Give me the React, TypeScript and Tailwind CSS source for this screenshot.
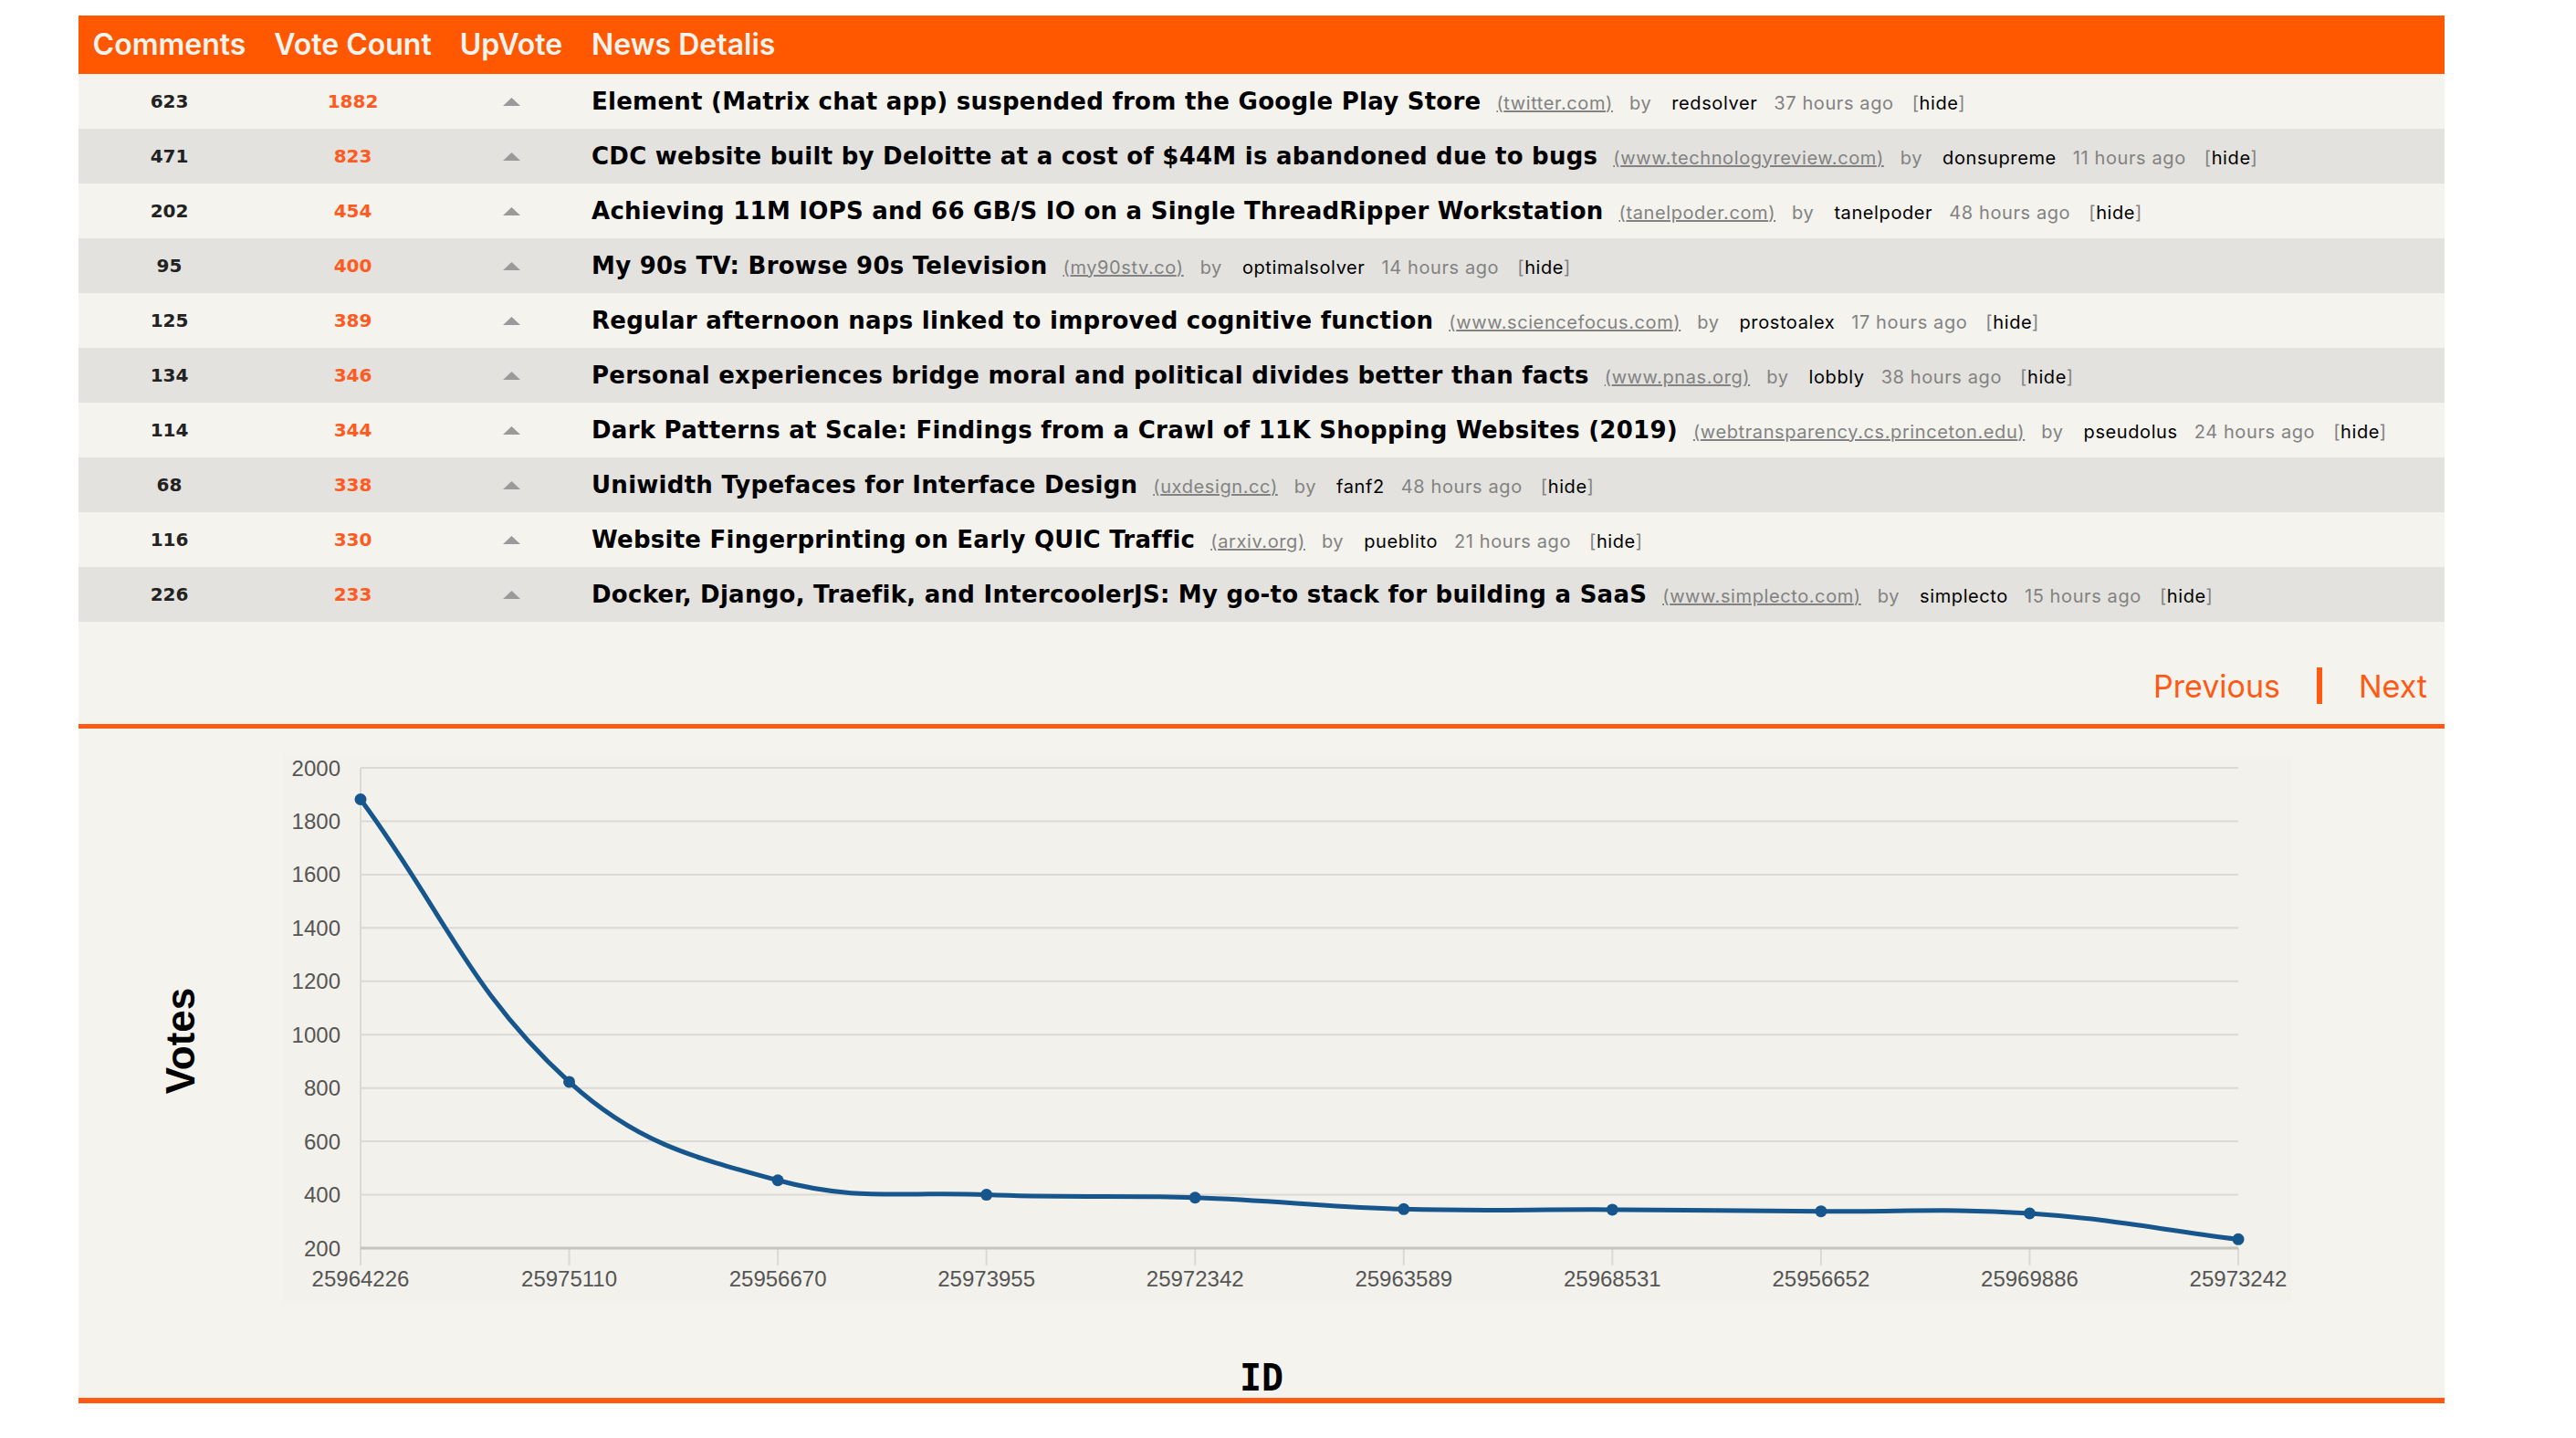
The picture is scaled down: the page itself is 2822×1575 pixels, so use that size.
import React from "react";

type Story = {
  id: number;
  comments: number;
  votes: number;
  title: string;
  site: string;
  user: string;
  age: string;
};

const stories: Story[] = [
  { id: 25964226, comments: 623, votes: 1882, title: "Element (Matrix chat app) suspended from the Google Play Store", site: "twitter.com", user: "redsolver", age: "37 hours ago" },
  { id: 25975110, comments: 471, votes: 823, title: "CDC website built by Deloitte at a cost of $44M is abandoned due to bugs", site: "www.technologyreview.com", user: "donsupreme", age: "11 hours ago" },
  { id: 25956670, comments: 202, votes: 454, title: "Achieving 11M IOPS and 66 GB/S IO on a Single ThreadRipper Workstation", site: "tanelpoder.com", user: "tanelpoder", age: "48 hours ago" },
  { id: 25973955, comments: 95, votes: 400, title: "My 90s TV: Browse 90s Television", site: "my90stv.co", user: "optimalsolver", age: "14 hours ago" },
  { id: 25972342, comments: 125, votes: 389, title: "Regular afternoon naps linked to improved cognitive function", site: "www.sciencefocus.com", user: "prostoalex", age: "17 hours ago" },
  { id: 25963589, comments: 134, votes: 346, title: "Personal experiences bridge moral and political divides better than facts", site: "www.pnas.org", user: "lobbly", age: "38 hours ago" },
  { id: 25968531, comments: 114, votes: 344, title: "Dark Patterns at Scale: Findings from a Crawl of 11K Shopping Websites (2019)", site: "webtransparency.cs.princeton.edu", user: "pseudolus", age: "24 hours ago" },
  { id: 25956652, comments: 68, votes: 338, title: "Uniwidth Typefaces for Interface Design", site: "uxdesign.cc", user: "fanf2", age: "48 hours ago" },
  { id: 25969886, comments: 116, votes: 330, title: "Website Fingerprinting on Early QUIC Traffic", site: "arxiv.org", user: "pueblito", age: "21 hours ago" },
  { id: 25973242, comments: 226, votes: 233, title: "Docker, Django, Traefik, and IntercoolerJS: My go-to stack for building a SaaS", site: "www.simplecto.com", user: "simplecto", age: "15 hours ago" },
];

function UpArrow() {
  return (
    <svg width="19" height="9" viewBox="0 0 19 9">
      <polygon points="9.5,0 19,9 0,9" fill="#9a9a9a" />
    </svg>
  );
}

type Pt = { x: number; y: number };

// chart.js style spline (tension 0.4)
function splinePath(pts: Pt[]) {
  const t = 0.4;
  const ctrl = pts.map((p1, i) => {
    const p0 = pts[i - 1] ?? p1;
    const p2 = pts[i + 1] ?? p1;
    const d01 = Math.hypot(p1.x - p0.x, p1.y - p0.y);
    const d12 = Math.hypot(p2.x - p1.x, p2.y - p1.y);
    const sum = d01 + d12 || 1;
    const fa = (t * d01) / sum;
    const fb = (t * d12) / sum;
    return {
      prev: { x: p1.x - fa * (p2.x - p0.x), y: p1.y - fa * (p2.y - p0.y) },
      next: { x: p1.x + fb * (p2.x - p0.x), y: p1.y + fb * (p2.y - p0.y) },
    };
  });
  let d = `M ${pts[0].x} ${pts[0].y}`;
  for (let i = 0; i < pts.length - 1; i++) {
    const a = ctrl[i].next;
    const b = ctrl[i + 1].prev;
    const p = pts[i + 1];
    d += ` C ${a.x} ${a.y} ${b.x} ${b.y} ${p.x} ${p.y}`;
  }
  return d;
}

function VotesChart() {
  const left = 85;
  const right = 2142;
  const step = (right - left) / (stories.length - 1);
  const yOf = (v: number) => 540 - ((v - 200) * 526) / 1800;
  const pts = stories.map((s, i) => ({ x: left + i * step, y: yOf(s.votes) }));
  const ticks = [400, 600, 800, 1000, 1200, 1400, 1600, 1800, 2000];

  return (
    <svg width="2201" height="600" viewBox="0 0 2201 600" className="block">
      {ticks.map((v) => (
        <line key={v} x1={left} x2={right} y1={yOf(v)} y2={yOf(v)} stroke="#dad9d4" strokeWidth="2" />
      ))}
      <line x1={left} x2={left} y1={yOf(2000)} y2={559} stroke="#dad9d4" strokeWidth="2" />
      {pts.slice(1).map((p, i) => (
        <line key={i} x1={p.x} x2={p.x} y1={540} y2={559} stroke="#dad9d4" strokeWidth="2" />
      ))}
      <line x1={left} x2={right} y1={540} y2={540} stroke="#c4c3be" strokeWidth="3" />
      {[200, ...ticks].map((v) => (
        <text key={v} x={63} y={yOf(v) + 8.5} textAnchor="end" fontSize="24" fill="#555" fontFamily="'Liberation Sans', Arial, sans-serif">
          {v}
        </text>
      ))}
      {stories.map((s, i) => (
        <text key={s.id} x={pts[i].x} y={582} textAnchor="middle" fontSize="24" fill="#555" fontFamily="'Liberation Sans', Arial, sans-serif">
          {s.id}
        </text>
      ))}
      <path d={splinePath(pts)} fill="none" stroke="#17568d" strokeWidth="5" />
      {pts.map((p, i) => (
        <circle key={i} cx={p.x} cy={p.y} r="6.5" fill="#17568d" />
      ))}
    </svg>
  );
}

export default function App() {
  return (
    <div className="min-h-screen bg-white pt-[17px]">
      <div className="ml-[86px] w-[2592px]">
        <div className="grid h-[64px] grid-cols-[199px_203px_144px_1fr] items-center bg-[#ff5800] font-['Inter',sans-serif] text-[32px] font-semibold text-[#f4f3ee]">
          <div className="text-center">Comments</div>
          <div className="text-center">Vote Count</div>
          <div className="text-center">UpVote</div>
          <div className="pl-4">News Detalis</div>
        </div>

        {stories.map((s, i) => (
          <div
            key={s.id}
            className={`grid h-[60px] grid-cols-[199px_203px_144px_1fr] items-center ${i % 2 === 0 ? "bg-[#f4f3ee]" : "bg-[#e3e2de]"}`}
          >
            <div className="text-center font-['DejaVu_Sans',sans-serif] text-[20px] font-bold text-[#222]">{s.comments}</div>
            <div className="text-center font-['DejaVu_Sans',sans-serif] text-[20px] font-bold text-[#ff5a1f]">{s.votes}</div>
            <div className="flex justify-center">
              <UpArrow />
            </div>
            <div className="flex items-baseline whitespace-nowrap pl-4">
              <span className="font-['DejaVu_Sans',sans-serif] text-[26px] font-bold tracking-[0.01em] text-black">{s.title}</span>
              <span className="ml-[17px] font-['Inter',sans-serif] text-[20px] tracking-[0.03em] text-[#828282] underline">({s.site})</span>
              <span className="ml-[18px] font-['Inter',sans-serif] text-[20px] tracking-[0.03em] text-[#828282]">by</span>
              <span className="ml-[22px] font-['Inter',sans-serif] text-[20px] tracking-[0.03em] text-black">{s.user}</span>
              <span className="ml-[18px] font-['Inter',sans-serif] text-[20px] tracking-[0.03em] text-[#828282]">{s.age}</span>
              <span className="ml-[20px] font-['Inter',sans-serif] text-[20px] tracking-[0.03em] text-[#828282]">
                [<span className="text-black">hide</span>]
              </span>
            </div>
          </div>
        ))}

        <div className="flex h-[117px] items-center justify-end gap-[40px] border-b-[5px] border-[#ff5a14] bg-[#f4f3ee] pr-[19px] pt-[28px] font-['Inter',sans-serif] text-[34px] text-[#ff5a14]">
          <span>Previous</span>
          <div className="h-[40px] w-[6px] bg-[#ff5a14]" />
          <span>Next</span>
        </div>

        <section className="h-[739px] border-b-[6px] border-[#ff5a14] bg-[#f4f3ee] pt-[29px]">
          <div className="flex h-[600px]">
            <div className="flex w-[224px] items-center justify-center pt-[26px]">
              <span className="-rotate-90 font-['Liberation_Sans',sans-serif] text-[44px] font-bold text-black">Votes</span>
            </div>
            <div className="bg-[#f2f1eb]">
              <VotesChart />
            </div>
          </div>
          <div className="pt-[62px] text-center font-['DejaVu_Sans_Mono',monospace] text-[40px] font-bold leading-none text-black">
            ID
          </div>
        </section>
      </div>
    </div>
  );
}
